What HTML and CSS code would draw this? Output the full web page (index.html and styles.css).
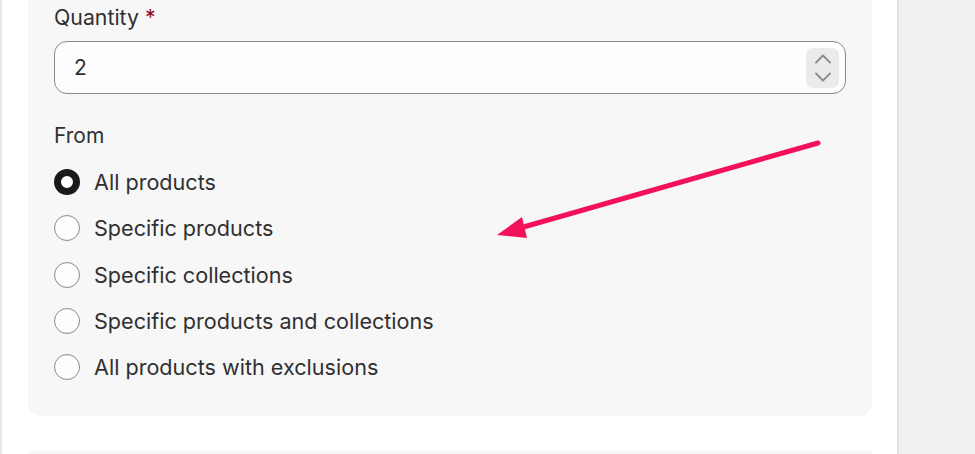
FILE: index.html
```html
<!DOCTYPE html>
<html>
<head>
<meta charset="utf-8">
<link rel="stylesheet" href="styles.css">
</head>
<body>
<div class="page">
  <div class="edge"></div>
  <main class="main">
    <section class="card">
      <label class="label">Quantity <span class="req">*</span></label>
      <div class="input">
        <span class="value">2</span>
        <div class="spinner">
          <svg width="18" height="10" viewBox="0 0 18 10"><path d="M2 8.5 L9 1.5 L16 8.5" fill="none" stroke="#8a8a8a" stroke-width="1.8" stroke-linecap="round" stroke-linejoin="round"/></svg>
          <svg width="18" height="10" viewBox="0 0 18 10"><path d="M2 1.5 L9 8.5 L16 1.5" fill="none" stroke="#8a8a8a" stroke-width="1.8" stroke-linecap="round" stroke-linejoin="round"/></svg>
        </div>
      </div>
      <div class="group-title">From</div>
      <ul class="radios">
        <li class="radio-row"><span class="radio checked"></span><span>All products</span></li>
        <li class="radio-row"><span class="radio"></span><span>Specific products</span></li>
        <li class="radio-row"><span class="radio"></span><span>Specific collections</span></li>
        <li class="radio-row"><span class="radio"></span><span>Specific products and collections</span></li>
        <li class="radio-row"><span class="radio"></span><span>All products with exclusions</span></li>
      </ul>
    </section>
    <section class="card next"></section>
    <svg class="arrow" width="975" height="454" viewBox="0 0 975 454">
      <line x1="818" y1="143" x2="520" y2="228" stroke="#f3125a" stroke-width="5" stroke-linecap="round"/>
      <polygon points="497,235 522,217 527,238" fill="#f3125a"/>
    </svg>
  </main>
  <aside class="side"></aside>
</div>
</body>
</html>
```
FILE: styles.css
```css
* { box-sizing: border-box; }
html, body { margin: 0; padding: 0; }
body {
  width: 975px;
  height: 454px;
  overflow: hidden;
  background: #ffffff;
  font-family: Inter, "Noto Sans", sans-serif;
  color: #303030;
}
.page {
  display: flex;
  height: 454px;
  position: relative;
}
.edge {
  width: 2px;
  background: #e6e6e6;
  flex: none;
}
.main {
  width: 895px;
  flex: none;
  padding: 0 25px 0 26px;
  background: #ffffff;
}
.side {
  flex: 1;
  background: #f1f1f1;
  border-left: 2px solid #e4e4e4;
}
.card {
  background: #f7f7f7;
  border-radius: 0 0 13px 13px;
  padding: 3px 26px 0 26px;
  height: 416px;
}
.card.next {
  height: 4px;
  margin-top: 34px;
  padding: 0;
  border-radius: 13px 13px 0 0;
}
.label {
  display: block;
  font-size: 21.3px;
  line-height: 28px;
  height: 28px;
}
.req { color: #8e0b21; }
.input {
  margin-top: 10px;
  height: 53px;
  border: 1.5px solid #8a8a8a;
  border-radius: 13px;
  background: #fdfdfd;
  display: flex;
  align-items: center;
  justify-content: space-between;
  padding: 0 6px 0 19px;
}
.value { font-size: 21px; }
.spinner {
  width: 33px;
  height: 40px;
  background: #ebebeb;
  border-radius: 7px;
  display: flex;
  flex-direction: column;
  align-items: center;
  justify-content: center;
  gap: 8px;
}
.group-title {
  margin-top: 28px;
  font-size: 21px;
  line-height: 28px;
}
.radios {
  list-style: none;
  margin: 19px 0 0 0;
  padding: 0;
  display: flex;
  flex-direction: column;
  gap: 20.3px;
}
.radio-row {
  display: flex;
  align-items: center;
  gap: 14px;
  font-size: 21.6px;
  height: 26px;
}
.radio {
  width: 26px;
  height: 26px;
  border-radius: 50%;
  border: 1.5px solid #8a8a8a;
  background: #fdfdfd;
  flex: none;
}
.radio.checked {
  border: 7px solid #1a1a1a;
  background: #ffffff;
}
.arrow {
  position: absolute;
  left: 0;
  top: 0;
  pointer-events: none;
}
```
